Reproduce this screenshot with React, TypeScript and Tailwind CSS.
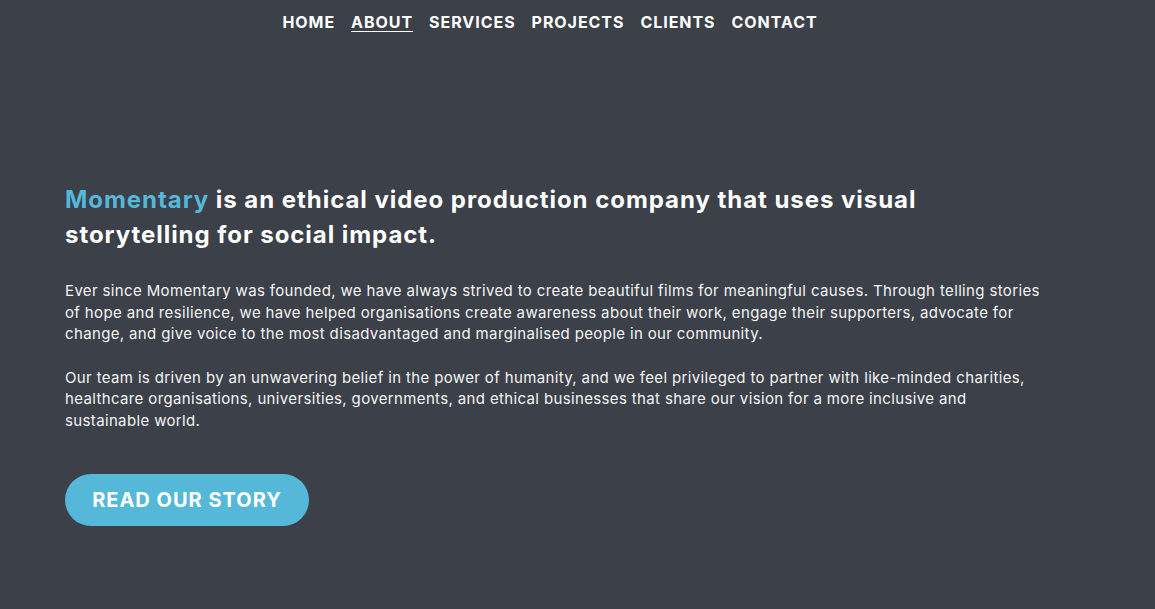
import React from "react"

const links = ["HOME", "ABOUT", "SERVICES", "PROJECTS", "CLIENTS", "CONTACT"]

export default function App() {
  return (
    <div className="min-h-[609px] w-full bg-[#3b4049] text-white font-['Inter',sans-serif]">
      <nav className="flex justify-center pr-[55px] pt-[12px]">
        <ul className="flex gap-[16px] text-[16px] font-bold leading-[20px] tracking-[0.95px]">
          {links.map((l) => (
            <li key={l}>
              <a className={l === "ABOUT" ? "underline decoration-1 underline-offset-[3px]" : ""}>{l}</a>
            </li>
          ))}
        </ul>
      </nav>

      <section className="px-[65px] pt-[150px]">
        <h1 className="text-[24px] font-bold leading-[35px] tracking-[0.95px]">
          <span className="text-[#56b8d9]">Momentary</span> is an ethical video production company that uses visual
          <br />
          storytelling for social impact.
        </h1>

        <p className="mt-[28px] text-[15px] leading-[21.5px] tracking-[0.36px] text-[#f4f4f4]">
          Ever since Momentary was founded, we have always strived to create beautiful films for meaningful causes. Through telling stories
          <br />
          of hope and resilience, we have helped organisations create awareness about their work, engage their supporters, advocate for
          <br />
          change, and give voice to the most disadvantaged and marginalised people in our community.
        </p>

        <p className="mt-[22px] text-[15px] leading-[21.5px] tracking-[0.36px] text-[#f4f4f4]">
          Our team is driven by an unwavering belief in the power of humanity, and we feel privileged to partner with like-minded charities,
          <br />
          healthcare organisations, universities, governments, and ethical businesses that share our vision for a more inclusive and
          <br />
          sustainable world.
        </p>

        <button className="mt-[43px] h-[52px] w-[244px] rounded-full bg-[#56b8d9] text-[20px] font-bold tracking-[1px] text-white">
          READ OUR STORY
        </button>
      </section>
    </div>
  )
}
